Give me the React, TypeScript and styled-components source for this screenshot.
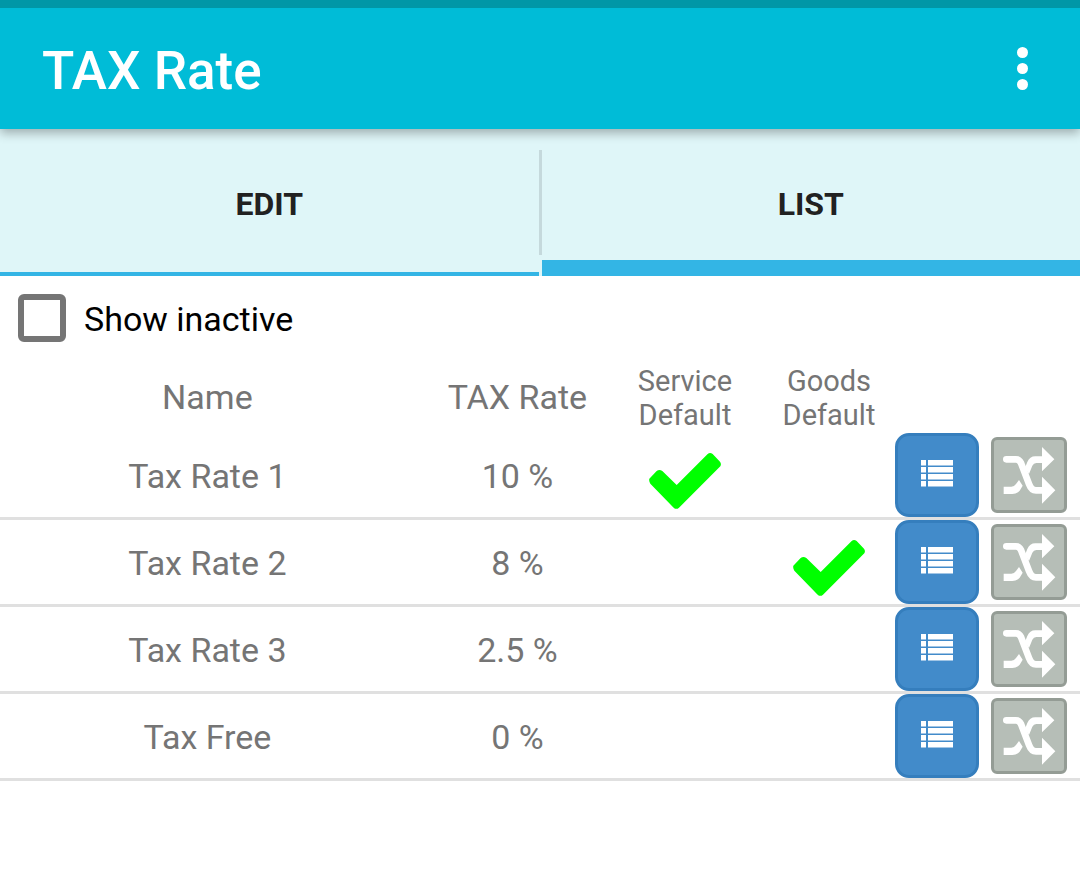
import React, { useState } from "react";
import styled, { createGlobalStyle } from "styled-components";

const GlobalStyle = createGlobalStyle`
  * { box-sizing: border-box; }
  body {
    margin: 0;
    background: #fff;
    font-family: Roboto, "Liberation Sans", sans-serif;
  }
  button { font: inherit; border: 0; padding: 0; cursor: pointer; }
`;

const AppBar = styled.header`
  position: relative;
  display: flex;
  align-items: center;
  justify-content: space-between;
  height: 129px;
  padding: 0 36px 0 42px;
  border-top: 8px solid #0097a7;
  background: #00bcd7;
  box-shadow: 0 4px 10px rgba(0, 0, 0, 0.3);
`;

const Title = styled.h1`
  margin: 0;
  padding-top: 4px;
  color: #fff;
  font-size: 53px;
  line-height: 64px;
  font-weight: 500;
`;

const MenuButton = styled.button`
  display: flex;
  align-items: center;
  justify-content: center;
  width: 44px;
  height: 64px;
  background: transparent;
`;

const Tabs = styled.nav`
  display: flex;
  height: 147px;
  background: #dff6f8;
`;

const Tab = styled.button<{ $active: boolean }>`
  flex: 1;
  padding-top: 2px;
  background: transparent;
  box-shadow: inset 0 ${(p) => (p.$active ? -16 : -4)}px 0 #33b5e5;
  color: #212121;
  font-size: 32px;
  line-height: 40px;
  font-weight: 700;
`;

const TabDivider = styled.span`
  width: 3px;
  margin: 21px 0;
  background: #c5d9dc;
`;

const FilterLabel = styled.label`
  display: flex;
  align-items: center;
  gap: 18px;
  height: 88px;
  padding: 0 18px 4px;
  color: #000;
  font-size: 34px;
  line-height: 40px;
`;

const FilterText = styled.span`
  padding-top: 2px;
`;

const Checkbox = styled.input`
  appearance: none;
  width: 48px;
  height: 48px;
  margin: 0;
  border: 6px solid #757575;
  border-radius: 6px;
  &:checked { background: #757575; }
`;

const RateTable = styled.table`
  width: 100%;
  table-layout: fixed;
  border-spacing: 0;
  color: #757575;
  font-size: 34px;
  line-height: 40px;
`;

const Column = styled.col<{ $width?: string }>`
  width: ${(p) => p.$width ?? "auto"};
`;

const HeadCell = styled.th<{ $small?: boolean; $inset?: boolean }>`
  height: 69px;
  padding: 0 0 ${(p) => (p.$small ? 1 : 4)}px ${(p) => (p.$inset ? 13 : 0)}px;
  font-weight: 400;
  ${(p) => p.$small && "font-size: 29px; line-height: 34px; vertical-align: top;"}
`;

const Cell = styled.td<{ $inset?: boolean }>`
  height: 87px;
  padding: 2px 0 0 ${(p) => (p.$inset ? 12 : 0)}px;
  border-bottom: 3px solid #e0e0e0;
  text-align: center;
`;

const ActionCell = styled(Cell)`
  padding: 0;
  text-align: left;
`;

const CheckIcon = styled.svg`
  display: block;
  width: 72px;
  height: 66px;
  margin: 0 auto;
  padding-top: 10px;
`;

const DetailButton = styled.button`
  display: flex;
  align-items: center;
  justify-content: center;
  width: 84px;
  height: 84px;
  border: 3px solid #357ebd;
  border-radius: 14px;
  background: #428bca;
`;

const ShuffleButton = styled.button`
  display: flex;
  align-items: center;
  justify-content: center;
  width: 76px;
  height: 76px;
  border: 3px solid #949c95;
  border-radius: 6px;
  background: #b6beb7;
`;

const Check = () => (
  <CheckIcon viewBox="57 69 216 168" role="img" aria-label="Default">
    <path
      fill="#0f0"
      d="M58 146Q56 153 61 161L131 233Q139 240 147 233L271 109Q275 102 270 95L248 72Q240 66 233 72L140 165L97 123Q88 117 80 123Z"
    />
  </CheckIcon>
);

const ListIcon = () => (
  <svg width="32" height="30" viewBox="0 0 32 30" fill="#fff" aria-hidden="true">
    {[0, 7, 14, 21].map((y) => (
      <path key={y} d={`M0 ${y}h5v5.4H0zM7 ${y}h25v5.4H7z`} />
    ))}
  </svg>
);

const ShuffleIcon = () => (
  <svg width="70" height="70" viewBox="342 45 210 210" fill="none" aria-hidden="true">
    <path
      fill="#fff"
      d="M371 185H394Q403 185 408 177L417 165L428 182L419 197Q411 207 397 207H371Z"
    />
    <path
      fill="#fff"
      d="M435 128L442 111Q449 94 466 94H490V114H469Q461 114 457 122L447 147Z"
    />
    <path
      stroke="#fff"
      strokeWidth="20"
      strokeLinecap="round"
      strokeLinejoin="round"
      d="M379 103H408Q418 103 423 114L447 177Q454 196 468 196H488"
    />
    <path fill="#fff" d="M486 66L523 103L486 139ZM486 155L526 196L486 236Z" />
  </svg>
);

interface Rate {
  name: string;
  rate: string;
  service?: boolean;
  goods?: boolean;
}

const rates: Rate[] = [
  { name: "Tax Rate 1", rate: "10 %", service: true },
  { name: "Tax Rate 2", rate: "8 %", goods: true },
  { name: "Tax Rate 3", rate: "2.5 %" },
  { name: "Tax Free", rate: "0 %" },
];

export default function App() {
  const [tab, setTab] = useState("LIST");
  return (
    <>
      <GlobalStyle />
      <AppBar>
        <Title>TAX Rate</Title>
        <MenuButton aria-label="More options">
          <svg width="12" height="44" viewBox="0 0 12 44" fill="#fff" aria-hidden="true">
            <circle cx="6.5" cy="5.5" r="5.5" />
            <circle cx="6.5" cy="21.5" r="5.5" />
            <circle cx="6.5" cy="37.5" r="5.5" />
          </svg>
        </MenuButton>
      </AppBar>
      <Tabs>
        <Tab $active={tab === "EDIT"} onClick={() => setTab("EDIT")}>EDIT</Tab>
        <TabDivider />
        <Tab $active={tab === "LIST"} onClick={() => setTab("LIST")}>LIST</Tab>
      </Tabs>
      <main>
        <FilterLabel>
          <Checkbox type="checkbox" />
          <FilterText>Show inactive</FilterText>
        </FilterLabel>
        <RateTable>
          <colgroup>
            <Column />
            <Column $width="19%" />
            <Column $width="130px" />
            <Column $width="145px" />
            <Column $width="96px" />
            <Column $width="89px" />
          </colgroup>
          <thead>
            <tr>
              <HeadCell>Name</HeadCell>
              <HeadCell>TAX Rate</HeadCell>
              <HeadCell $small>Service<br />Default</HeadCell>
              <HeadCell $small $inset>Goods<br />Default</HeadCell>
              <HeadCell as="td" colSpan={2} />
            </tr>
          </thead>
          <tbody>
            {rates.map((r) => (
              <tr key={r.name}>
                <Cell>{r.name}</Cell>
                <Cell>{r.rate}</Cell>
                <Cell>{r.service && <Check />}</Cell>
                <Cell $inset>{r.goods && <Check />}</Cell>
                <ActionCell>
                  <DetailButton aria-label={`Details of ${r.name}`}><ListIcon /></DetailButton>
                </ActionCell>
                <ActionCell>
                  <ShuffleButton aria-label={`Reorder ${r.name}`}><ShuffleIcon /></ShuffleButton>
                </ActionCell>
              </tr>
            ))}
          </tbody>
        </RateTable>
      </main>
    </>
  );
}
